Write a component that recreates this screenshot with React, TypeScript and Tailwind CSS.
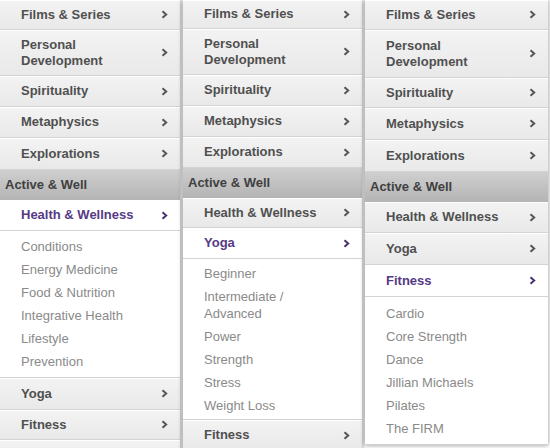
import React from 'react';

type Row =
  | { kind: 'item'; label: string[]; h: string; active?: boolean }
  | { kind: 'header'; label: string; h: string }
  | { kind: 'sub'; items: string[][]; h: string };

const font = { fontFamily: '"Liberation Sans", Arial, sans-serif' };

function Chevron({ purple }: { purple?: boolean }) {
  return (
    <svg width="7" height="9" viewBox="0 0 7 9" className="shrink-0">
      <path
        d="M1.5 1.2 L5.2 4.5 L1.5 7.8"
        fill="none"
        stroke={purple ? '#4b3272' : '#555555'}
        strokeWidth="2"
      />
    </svg>
  );
}

function Panel({ rows, width, pl, pr }: { rows: Row[]; width: string; pl: string; pr: string }) {
  return (
    <div className={`${width} shrink-0 flex flex-col bg-white shadow-[0_0_5px_rgba(0,0,0,0.45)] relative`}>
      {rows.map((r, i) => {
        if (r.kind === 'header') {
          return (
            <div
              key={i}
              className={`${r.h} shrink-0 flex items-center pl-[5px] bg-gradient-to-b from-[#cfcfcf] to-[#b4b4b4] text-[13px] font-bold text-[#404040]`}
            >
              {r.label}
            </div>
          );
        }
        if (r.kind === 'sub') {
          return (
            <div key={i} className={`${r.h} shrink-0 flex flex-col justify-center bg-white ${pl} border-b border-[#d2d2d2]`}>
              {r.items.map((it, j) => (
                <div key={j} className="text-[13px] text-[#8a8a8a] leading-[17px] py-[3px]">
                  {it.map((line, k) => (
                    <div key={k}>{line}</div>
                  ))}
                </div>
              ))}
            </div>
          );
        }
        const empty = r.label.join('') === '';
        return (
          <div
            key={i}
            className={`${r.h} shrink-0 flex items-center justify-between ${pl} ${pr} border-b border-[#d3d3d3] ${
              r.active
                ? 'bg-white text-[#563a85]'
                : 'bg-gradient-to-b from-[#f3f3f3] to-[#e9e9e9] text-[#505050] shadow-[inset_0_1px_0_#ffffff]'
            } text-[13px] font-bold leading-[16px]`}
          >
            <div>
              {r.label.map((l, k) => (
                <div key={k}>{l}</div>
              ))}
            </div>
            {!empty && <Chevron purple={r.active} />}
          </div>
        );
      })}
    </div>
  );
}

export default function App() {
  const top = (hs: string[]): Row[] => [
    { kind: 'item', label: ['Films & Series'], h: hs[0] },
    { kind: 'item', label: ['Personal', 'Development'], h: hs[1] },
    { kind: 'item', label: ['Spirituality'], h: hs[2] },
    { kind: 'item', label: ['Metaphysics'], h: hs[3] },
    { kind: 'item', label: ['Explorations'], h: hs[4] },
    { kind: 'header', label: 'Active & Well', h: hs[5] },
  ];

  const p1: Row[] = [
    ...top(['h-[30px]', 'h-[46px]', 'h-[31px]', 'h-[31px]', 'h-[32px]', 'h-[30px]']),
    { kind: 'item', label: ['Health & Wellness'], h: 'h-[31px]', active: true },
    {
      kind: 'sub',
      h: 'h-[147px]',
      items: [['Conditions'], ['Energy Medicine'], ['Food & Nutrition'], ['Integrative Health'], ['Lifestyle'], ['Prevention']],
    },
    { kind: 'item', label: ['Yoga'], h: 'h-[32px]' },
    { kind: 'item', label: ['Fitness'], h: 'h-[30px]' },
    { kind: 'item', label: [''], h: 'h-[30px]' },
  ];

  const p2: Row[] = [
    ...top(['h-[29px]', 'h-[46px]', 'h-[31px]', 'h-[31px]', 'h-[31px]', 'h-[30px]']),
    { kind: 'item', label: ['Health & Wellness'], h: 'h-[30px]' },
    { kind: 'item', label: ['Yoga'], h: 'h-[31px]', active: true },
    {
      kind: 'sub',
      h: 'h-[161px]',
      items: [['Beginner'], ['Intermediate /', 'Advanced'], ['Power'], ['Strength'], ['Stress'], ['Weight Loss']],
    },
    { kind: 'item', label: ['Fitness'], h: 'h-[31px]' },
  ];

  const p3: Row[] = [
    ...top(['h-[30px]', 'h-[48px]', 'h-[30px]', 'h-[32px]', 'h-[32px]', 'h-[30px]']),
    { kind: 'item', label: ['Health & Wellness'], h: 'h-[31px]' },
    { kind: 'item', label: ['Yoga'], h: 'h-[32px]' },
    { kind: 'item', label: ['Fitness'], h: 'h-[32px]', active: true },
    {
      kind: 'sub',
      h: 'h-[148px]',
      items: [['Cardio'], ['Core Strength'], ['Dance'], ['Jillian Michaels'], ['Pilates'], ['The FIRM']],
    },
  ];

  return (
    <div className="w-[550px] h-[448px] overflow-hidden bg-white flex items-start gap-[3px]" style={font}>
      <Panel rows={p1} width="w-[180px]" pl="pl-[21px]" pr="pr-[12px]" />
      <Panel rows={p2} width="w-[179px]" pl="pl-[21px]" pr="pr-[12px]" />
      <Panel rows={p3} width="w-[183px]" pl="pl-[21px]" pr="pr-[12px]" />
    </div>
  );
}
